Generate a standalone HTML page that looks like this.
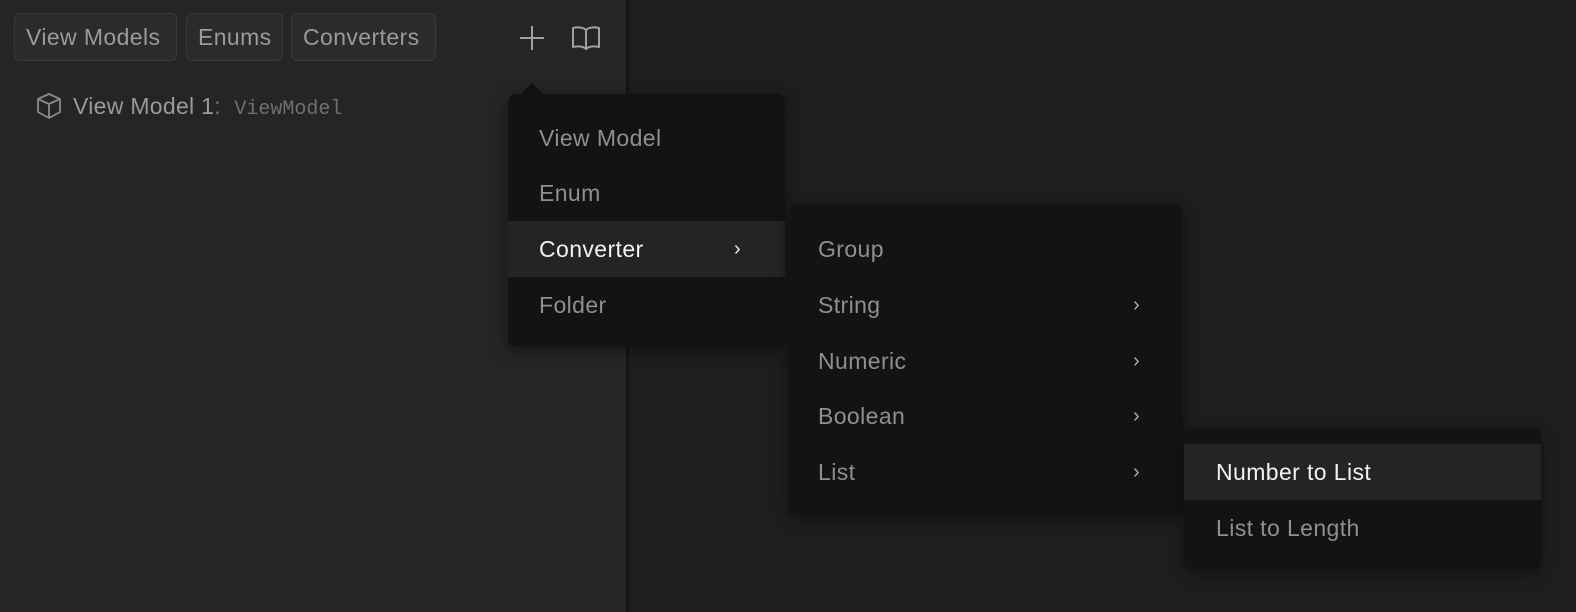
<!DOCTYPE html>
<html><head><style>
*{margin:0;padding:0;box-sizing:border-box}
body{width:1576px;height:612px;overflow:hidden;background:#1e1e1e;font-family:"Liberation Sans",sans-serif;position:relative}
.left{position:absolute;left:0;top:0;width:627px;height:612px;background:#252525}
.div{position:absolute;left:626px;top:0;width:3px;height:612px;background:#151515}
.tab{position:absolute;top:13px;height:48px;border:1px solid #3a3a3a;background:#2b2b2b;border-radius:6px;color:#9a9a9a;font-size:23px;letter-spacing:0.4px;line-height:47px;padding:0 11px;white-space:nowrap}
.menu{position:absolute;background:#131313;border-radius:8px;box-shadow:0 4px 16px rgba(0,0,0,.4)}
.it{position:absolute;left:0;right:0;height:56px;line-height:57px;font-size:23px;letter-spacing:0.4px;color:#8f8f8f}
.it.on{background:#242424;color:#f2f2f2}
.ch{position:absolute;font-size:20px;color:#aaa}
</style></head><body>
<div class="left"></div><div class="div"></div>
<div class="tab" style="left:14px;width:163px">View Models</div>
<div class="tab" style="left:186px;width:97px">Enums</div>
<div class="tab" style="left:291px;width:145px">Converters</div>
<svg style="position:absolute;left:517px;top:23px" width="30" height="30"><path d="M15 3V27M3 15H27" stroke="#a0a0a0" stroke-width="2"/></svg>
<svg style="position:absolute;left:570px;top:24px" width="32" height="28" viewBox="0 0 32 28"><path d="M16 6C13 3 7 3 3 4V23C7 22 13 22 16 25C19 22 25 22 29 23V4C25 3 19 3 16 6ZM16 6V25" fill="none" stroke="#a0a0a0" stroke-width="2" stroke-linejoin="round"/></svg>
<svg style="position:absolute;left:34px;top:92px" width="30" height="28" viewBox="0 0 30 28"><path d="M15 2L26 7V20L15 26L4 20V7ZM4 7L15 12L26 7M15 12V26" fill="none" stroke="#8a8a8a" stroke-width="1.8" stroke-linejoin="round"/></svg>
<div style="position:absolute;left:73px;top:91px;font-size:23px;letter-spacing:0.3px;color:#9a9a9a;line-height:30px;white-space:nowrap">View Model 1<span style="color:#777">:&nbsp; </span><span style="font-family:'Liberation Mono',monospace;color:#6f6f6f;font-size:20px;letter-spacing:0">ViewModel</span></div>
<svg style="position:absolute;left:519px;top:82px" width="26" height="14"><path d="M0 14L13 1L26 14Z" fill="#131313"/></svg>
<div class="menu" style="left:508px;top:94px;width:277px;height:253px">
<div class="it" style="top:16px;padding-left:31px">View Model</div>
<div class="it" style="top:71px;padding-left:31px">Enum</div>
<div class="it on" style="top:127px;padding-left:31px;border-radius:0">Converter<span class="ch" style="left:226px;color:#eee">›</span></div>
<div class="it" style="top:183px;padding-left:31px">Folder</div>
</div>
<div class="menu" style="left:788px;top:205px;width:395px;height:310px">
<div class="it" style="top:16px;padding-left:30px">Group</div>
<div class="it" style="top:72px;padding-left:30px">String<span class="ch" style="left:345px">›</span></div>
<div class="it" style="top:128px;padding-left:30px">Numeric<span class="ch" style="left:345px">›</span></div>
<div class="it" style="top:183px;padding-left:30px">Boolean<span class="ch" style="left:345px">›</span></div>
<div class="it" style="top:239px;padding-left:30px">List<span class="ch" style="left:345px">›</span></div>
</div>
<div class="menu" style="left:1184px;top:428px;width:357px;height:142px">
<div class="it on" style="top:16px;padding-left:32px">Number to List</div>
<div class="it" style="top:72px;padding-left:32px">List to Length</div>
</div>
</body></html>
